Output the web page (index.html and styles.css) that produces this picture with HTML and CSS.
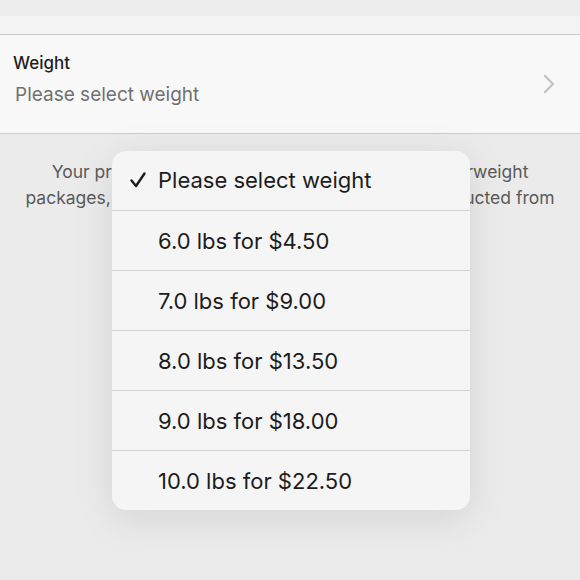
FILE: index.html
```html
<!DOCTYPE html>
<html>
<head>
<meta charset="utf-8">
<link rel="stylesheet" href="styles.css">
</head>
<body>
<div class="screen">
  <div class="topbar"></div>
  <div class="gap"></div>
  <div class="card">
    <div class="card-text">
      <div class="label">Weight</div>
      <div class="value">Please select weight</div>
    </div>
    <svg class="chevron" width="14" height="20" viewBox="0 0 14 20"><path d="M3 2 L11 10 L3 18" fill="none" stroke="#c2c2c2" stroke-width="2.2" stroke-linecap="round" stroke-linejoin="round"/></svg>
  </div>
  <p class="note">Your product is considered to be an oversized overweight<br>packages, and the additional shipping fee will be deducted from</p>
  <div class="menu">
    <div class="item selected"><svg class="check" width="18" height="18" viewBox="0 0 18 18"><path d="M2.5 9.5 L7 15 L15.5 2.5" fill="none" stroke="#1c1c1c" stroke-width="2.4" stroke-linecap="round" stroke-linejoin="round"/></svg>Please select weight</div>
    <div class="item">6.0 lbs for $4.50</div>
    <div class="item">7.0 lbs for $9.00</div>
    <div class="item">8.0 lbs for $13.50</div>
    <div class="item">9.0 lbs for $18.00</div>
    <div class="item">10.0 lbs for $22.50</div>
  </div>
</div>
</body>
</html>
```
FILE: styles.css
```css
html, body {
  margin: 0;
  padding: 0;
}
body {
  background: #ebebeb;
  font-family: Inter, "Noto Sans", sans-serif;
  width: 580px;
  height: 580px;
  overflow: hidden;
}
.screen {
  position: relative;
  height: 580px;
}
.topbar {
  height: 16px;
  background: #ededed;
}
.gap {
  height: 18px;
  background: #f3f3f3;
}
.card {
  background: #f8f8f8;
  border-top: 1px solid #cbcbcb;
  border-bottom: 1px solid #cbcbcb;
  height: 100px;
  display: flex;
  align-items: center;
  justify-content: space-between;
  padding: 0 24px 0 13px;
  box-sizing: border-box;
}
.card-text {
  padding-bottom: 4px;
}
.label {
  font-size: 17px;
  font-weight: 500;
  color: #1e1e1e;
  line-height: 22px;
  position: relative;
  top: -4px;
}
.value {
  font-size: 19px;
  color: #707070;
  line-height: 28px;
  margin-top: 3px;
  padding-left: 2px;
}
.chevron {
  display: block;
}
.note {
  margin: 25px 0 0;
  text-align: center;
  font-size: 17.5px;
  line-height: 26px;
  color: #5a5a5a;
}
.menu {
  position: absolute;
  left: 112px;
  top: 151px;
  width: 358px;
  background: #f5f5f5;
  border-radius: 14px;
  box-shadow: 0 8px 40px rgba(0,0,0,0.10);
  overflow: hidden;
}
.item {
  height: 60px;
  box-sizing: border-box;
  display: flex;
  align-items: center;
  padding-left: 46px;
  font-size: 22px;
  color: #1c1c1c;
  border-top: 1px solid #d2d2d2;
}
.item:first-child {
  border-top: none;
  height: 59px;
  padding-bottom: 2px;
}
.check {
  margin-left: -29px;
  margin-right: 11px;
  flex: none;
}
```
